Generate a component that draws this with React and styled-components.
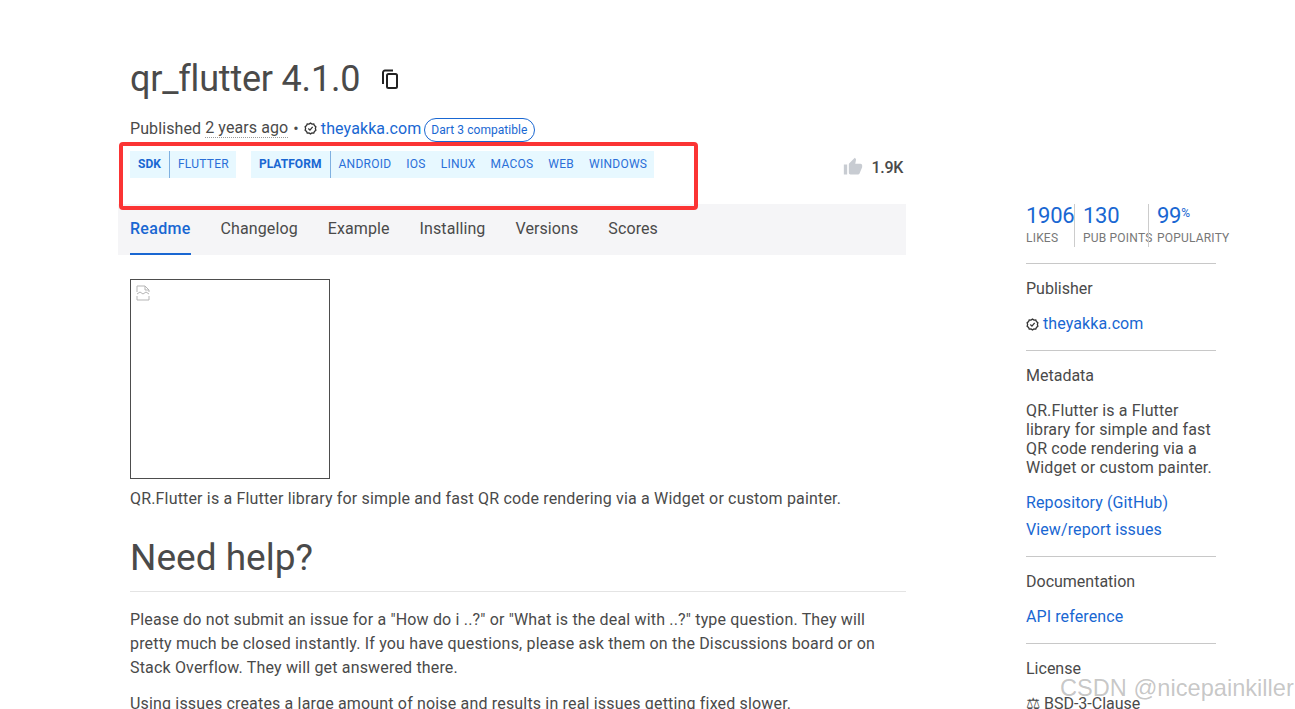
import React from 'react';
import styled, { createGlobalStyle } from 'styled-components';

const GlobalStyle = createGlobalStyle`
  html, body {
    margin: 0;
    padding: 0;
    background: #fff;
    overflow: hidden;
    height: 709px;
    font-family: Roboto, "Liberation Sans", sans-serif;
    color: #4a4a4a;
  }
  * { box-sizing: border-box; }
`;

const Page = styled.div`
  position: relative;
  width: 1295px;
  height: 709px;
  overflow: hidden;
  display: flex;
  align-items: flex-start;
  padding-left: 118px;
`;

const Main = styled.main`
  width: 788px;
  flex: none;
`;

const Header = styled.header`
  padding: 0 12px;
`;

const TitleRow = styled.div`
  display: flex;
  align-items: center;
  gap: 21px;
  height: 36px;
  margin-top: 61px;
`;

const Title = styled.h1`
  margin: 0;
  font-size: 36px;
  font-weight: 400;
  line-height: 36px;
  letter-spacing: -0.2px;
  color: #4a4a4a;
`;

const Meta = styled.div`
  display: flex;
  align-items: center;
  height: 24px;
  margin-top: 19px;
  font-size: 16px;
  letter-spacing: 0.1px;
`;

const Dotted = styled.span`
  margin-left: 4px;
  border-bottom: 1px dotted #999;
  line-height: 18px;
`;

const Sep = styled.span`
  margin: 0 5px 0 5px;
`;

const Link = styled.a`
  color: #1967d2;
  font-size: 16px;
  letter-spacing: 0.1px;
  text-decoration: none;
`;

const VerifiedIcon = styled.svg`
  width: 13px;
  height: 13px;
  margin: 1px 4px 0 0;
  flex: none;
`;

const Badge = styled.span`
  margin: 4px 0 0 3px;
  height: 24px;
  padding: 0 6px;
  border: 1px solid #1967d2;
  border-radius: 12px;
  color: #1967d2;
  font-size: 12px;
  line-height: 22px;
  letter-spacing: 0.06px;
`;

const TagRow = styled.div`
  display: flex;
  align-items: flex-start;
  justify-content: space-between;
  height: 53px;
  margin-top: 11px;
`;

const TagGroups = styled.div`
  display: flex;
  gap: 15px;
`;

const TagGroup = styled.div`
  display: flex;
  height: 27px;
  background: #e7f8ff;
  font-size: 12px;
  line-height: 27px;
  padding-right: 7px;
`;

const TagLabel = styled.span`
  padding: 0 8px;
  font-weight: 700;
  letter-spacing: 0.05px;
  color: #1967d2;
  border-right: 1px solid #7fb0e0;
`;

const Tag = styled.span`
  margin-left: ${p => (p.$first ? 8 : 15)}px;
  letter-spacing: 0.25px;
  color: #2a6fd8;
`;

const Likes = styled.div`
  display: flex;
  align-items: center;
  gap: 8px;
  height: 22px;
  margin: 5px -9px 0 0;
  font-size: 16px;
  font-weight: 500;
  letter-spacing: -0.3px;
  color: #4a4a4a;
`;

const Tabs = styled.nav`
  display: flex;
  gap: 30px;
  height: 51px;
  padding: 0 12px;
  background: #f5f5f7;
`;

const TabItem = styled.a`
  height: 51px;
  font-size: 16px;
  line-height: 49px;
  letter-spacing: ${p => (p.$active ? 0.3 : 0.1)}px;
  color: ${p => (p.$active ? '#1967d2' : '#4a4a4a')};
  font-weight: ${p => (p.$active ? 500 : 400)};
  border-bottom: ${p => (p.$active ? '2px solid #1967d2' : 'none')};
`;

const Content = styled.article`
  padding: 24px 0 0 12px;
  font-size: 16px;
  line-height: 24px;
  letter-spacing: 0.17px;
`;

const BrokenImage = styled.div`
  width: 200px;
  height: 200px;
  border: 1px solid #4d4d4d;
  padding: 4px 5px;
`;

const Paragraph = styled.p`
  margin: ${p => p.$top || 8}px 0 0;
  color: #4a4a4a;
`;

const SectionTitle = styled.h2`
  margin: 25px 0 0;
  padding-bottom: 11px;
  font-size: 37px;
  font-weight: 400;
  line-height: 44px;
  letter-spacing: 0;
  border-bottom: 1px solid #e4e4e4;
  color: #4a4a4a;
`;

const Aside = styled.aside`
  width: 190px;
  flex: none;
  margin: 204px 0 0 120px;
`;

const Scores = styled.div`
  display: flex;
  height: 43px;
  margin-bottom: 16px;
`;

const Score = styled.div`
  width: ${p => p.$w}px;
  flex: none;
  padding-left: ${p => p.$pad || 0}px;
  border-left: ${p => (p.$pad ? '1px solid #ccc' : 'none')};
`;

const ScoreValue = styled.div`
  font-size: 22px;
  line-height: 24px;
  letter-spacing: -0.3px;
  color: #1967d2;
  white-space: nowrap;
  small { font-size: 12px; line-height: 0; vertical-align: 6px; }
`;

const ScoreLabel = styled.div`
  margin-top: 2px;
  font-size: 12px;
  line-height: 16px;
  letter-spacing: 0.2px;
  color: #777;
  white-space: nowrap;
`;

const Block = styled.section`
  border-top: 1px solid #c8c8c8;
  padding: 14px 0 13px;
`;

const BlockTitle = styled.h3`
  margin: 0 0 10px;
  font-size: 16px;
  font-weight: 400;
  line-height: 22px;
  color: #4a4a4a;
`;

const BlockText = styled.p`
  margin: 14px 0 12px;
  font-size: 16px;
  line-height: 19px;
  letter-spacing: 0.12px;
  color: #4a4a4a;
`;

const BlockLink = styled.div`
  display: flex;
  align-items: center;
  height: 27px;
  font-size: 16px;
`;

const Watermark = styled.div`
  position: absolute;
  left: 1060px;
  top: 673px;
  font-family: "Liberation Sans", sans-serif;
  font-size: 23.6px;
  line-height: 30px;
  color: rgba(130, 130, 130, 0.45);
  white-space: nowrap;
`;

const Annotation = styled.div`
  position: absolute;
  left: 119px;
  top: 142px;
  width: 579px;
  height: 68px;
  border: 4px solid #fb3434;
  border-radius: 4px;
`;

function Verified() {
  return (
    <VerifiedIcon viewBox="0 0 24 24" fill="none" stroke="#333" strokeWidth="2.4">
      <path d="M12 2l2.8 1.8 3.3-.2 1.2 3.1 2.6 2.1-.9 3.2.9 3.2-2.6 2.1-1.2 3.1-3.3-.2L12 22l-2.8-1.8-3.3.2-1.2-3.1-2.6-2.1.9-3.2-.9-3.2 2.6-2.1 1.2-3.1 3.3.2z" />
      <path d="M8 12l3 3 5-6" />
    </VerifiedIcon>
  );
}

const platforms = ['ANDROID', 'IOS', 'LINUX', 'MACOS', 'WEB', 'WINDOWS'];
const tabs = ['Readme', 'Changelog', 'Example', 'Installing', 'Versions', 'Scores'];

export default function App() {
  return (
    <>
      <GlobalStyle />
      <Page>
        <Main>
          <Header>
            <TitleRow>
              <Title>qr_flutter 4.1.0</Title>
              <svg width="18" height="20" viewBox="0 0 18 20" fill="none" stroke="#222" strokeWidth="2">
                <rect x="6" y="5" width="10" height="14" rx="1.5" />
                <path d="M12 1.5H4a2 2 0 0 0-2 2V15" />
              </svg>
            </TitleRow>
            <Meta>
              Published
              <Dotted>2 years ago</Dotted>
              <Sep>•</Sep>
              <Verified />
              <Link>theyakka.com</Link>
              <Badge>Dart 3 compatible</Badge>
            </Meta>
            <TagRow>
              <TagGroups>
                <TagGroup>
                  <TagLabel>SDK</TagLabel>
                  <Tag $first>FLUTTER</Tag>
                </TagGroup>
                <TagGroup>
                  <TagLabel>PLATFORM</TagLabel>
                  {platforms.map((p, i) => (
                    <Tag key={p} $first={i === 0}>{p}</Tag>
                  ))}
                </TagGroup>
              </TagGroups>
              <Likes>
                <svg width="20" height="20" viewBox="0 0 24 24" fill="#c8ccd2">
                  <path d="M1 21h4V9H1v12zm22-11c0-1.1-.9-2-2-2h-6.31l.95-4.57.03-.32c0-.41-.17-.79-.44-1.06L14.17 1 7.59 7.59C7.22 7.95 7 8.45 7 9v10c0 1.1.9 2 2 2h9c.83 0 1.54-.5 1.84-1.22l3.02-7.05c.09-.23.14-.47.14-.73v-2z" />
                </svg>
                1.9K
              </Likes>
            </TagRow>
          </Header>
          <Tabs>
            {tabs.map((t, i) => (
              <TabItem key={t} $active={i === 0}>{t}</TabItem>
            ))}
          </Tabs>
          <Content>
            <BrokenImage>
              <svg width="14" height="16" viewBox="0 0 14 16" fill="none" stroke="#b5b5b5">
                <path d="M1 7V1h8l4 4v2M1 11v4h12v-4M1 9l3-2 3 2 3-2 3 2" />
                <path d="M9 1v4h4" />
              </svg>
            </BrokenImage>
            <Paragraph>QR.Flutter is a Flutter library for simple and fast QR code rendering via a Widget or custom painter.</Paragraph>
            <SectionTitle>Need help?</SectionTitle>
            <Paragraph $top={16}>
              Please do not submit an issue for a "How do i ..?" or "What is the deal with ..?" type question. They will pretty much be closed instantly. If you have questions, please ask them on the Discussions board or on Stack Overflow. They will get answered there.
            </Paragraph>
            <Paragraph $top={12}>Using issues creates a large amount of noise and results in real issues getting fixed slower.</Paragraph>
          </Content>
        </Main>
        <Aside>
          <Scores>
            <Score $w={48}>
              <ScoreValue>1906</ScoreValue>
              <ScoreLabel>LIKES</ScoreLabel>
            </Score>
            <Score $w={74} $pad={8}>
              <ScoreValue>130</ScoreValue>
              <ScoreLabel>PUB POINTS</ScoreLabel>
            </Score>
            <Score $w={68} $pad={8}>
              <ScoreValue>99<small>%</small></ScoreValue>
              <ScoreLabel>POPULARITY</ScoreLabel>
            </Score>
          </Scores>
          <Block>
            <BlockTitle>Publisher</BlockTitle>
            <BlockLink>
              <Verified />
              <Link>theyakka.com</Link>
            </BlockLink>
          </Block>
          <Block>
            <BlockTitle>Metadata</BlockTitle>
            <BlockText>QR.Flutter is a Flutter library for simple and fast QR code rendering via a Widget or custom painter.</BlockText>
            <BlockLink><Link>Repository (GitHub)</Link></BlockLink>
            <BlockLink><Link>View/report issues</Link></BlockLink>
          </Block>
          <Block>
            <BlockTitle>Documentation</BlockTitle>
            <BlockLink><Link>API reference</Link></BlockLink>
          </Block>
          <Block>
            <BlockTitle>License</BlockTitle>
            <BlockLink>⚖ BSD-3-Clause</BlockLink>
          </Block>
        </Aside>
        <Annotation />
        <Watermark>CSDN @nicepainkiller</Watermark>
      </Page>
    </>
  );
}
